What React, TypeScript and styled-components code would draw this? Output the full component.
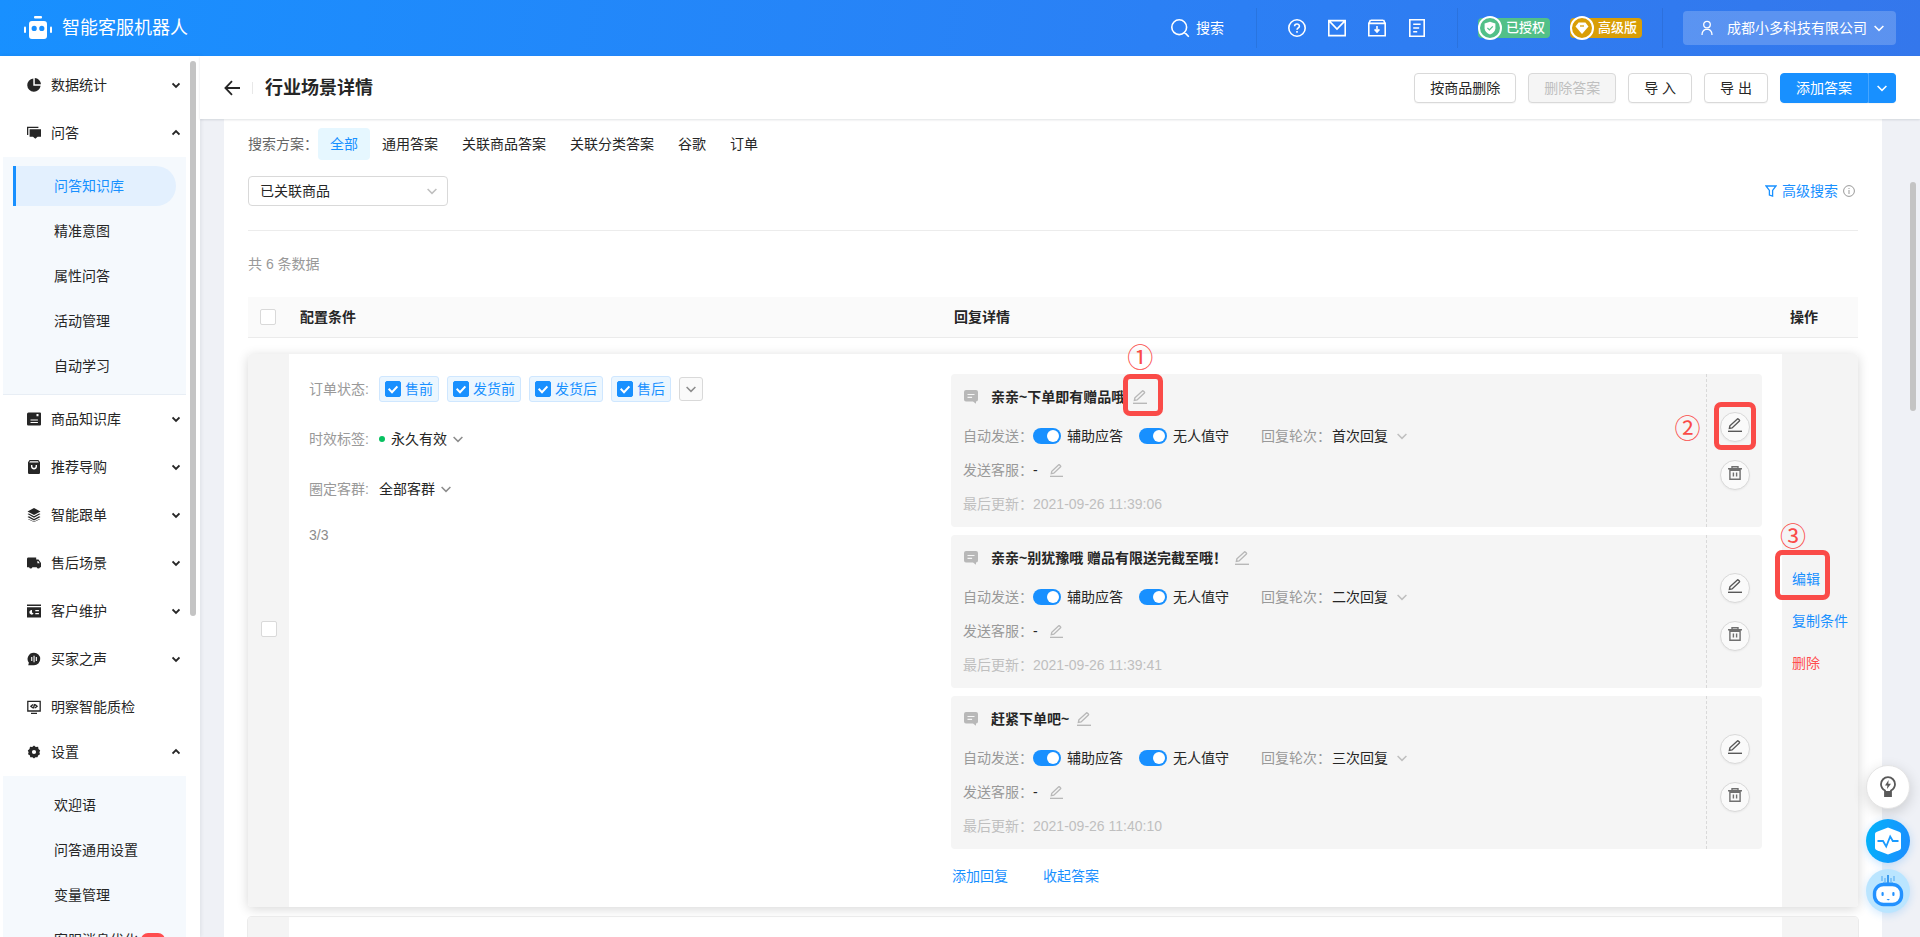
import React from "react";
import styled, { createGlobalStyle, css } from "styled-components";

const BLUE = "#1890ff";
const RED = "#fa4b48";

const GlobalStyle = createGlobalStyle`
  *, *::before, *::after { box-sizing: border-box; }
  body {
    margin: 0;
    color: #262626;
    background: #eff1f6;
    font-family: "Liberation Sans", "Noto Sans CJK SC", sans-serif;
    font-size: 14px;
    line-height: 22px;
  }
  button, input, select { font: inherit; color: inherit; margin: 0; }
  button { cursor: pointer; }
  a { text-decoration: none; }
  svg { display: block; flex: none; }
`;

/* ---------- icons ---------- */

type IconProps = { size?: number; color?: string };

const Chevron = ({ size = 10, color = "currentColor", up = false, weight = 1.5 }: IconProps & { up?: boolean; weight?: number }) => (
  <svg width={size} height={size} viewBox="0 0 10 10" fill="none" stroke={color} strokeWidth={weight} aria-hidden>
    <path d={up ? "M.6 7L5 2.600 9.400 7" : "M.6 3L5 7.400 9.400 3"} />
  </svg>
);

const PencilIcon = ({ size = 14, color = "#b8b8b8" }: IconProps) => (
  <svg width={size} height={size} viewBox="0 0 14 14" fill="none" stroke={color} strokeWidth="1.4" aria-hidden>
    <path d="M1.400 10.400l.5-2.600L9.400.9a.6.6 0 0 1 .8 0l1.200 1.200a.6.6 0 0 1 0 .8L4.100 9.900z" />
    <path d="M0 13.300h14" />
  </svg>
);

const TrashIcon = () => (
  <svg width="14" height="14" viewBox="0 0 14 14" fill="none" stroke="#707070" strokeWidth="1.4" aria-hidden>
    <path d="M0 2.8h14M4 2.6V.7h6v1.9M1.9 4.2v9.1h10.2V4.2zM5.4 6.6v4M8.6 6.6v4" />
  </svg>
);

const RobotLogo = () => (
  <svg width="28" height="24" viewBox="0 0 28 24" fill="#fff" aria-hidden>
    <rect x="10" y="0" width="8" height="2.6" rx="1" />
    <path fillRule="evenodd" d="M8 5h12a3 3 0 0 1 3 3v12a3 3 0 0 1-3 3H8a3 3 0 0 1-3-3V8a3 3 0 0 1 3-3zm2.2 4.8a2.6 2.6 0 1 0 0 5.2 2.6 2.6 0 0 0 0-5.2zm7.6 0a2.6 2.6 0 1 0 0 5.2 2.6 2.6 0 0 0 0-5.2z" />
    <rect x="0" y="10.4" width="2" height="6.6" rx="1" />
    <rect x="26" y="10.4" width="2" height="6.6" rx="1" />
  </svg>
);

const HeaderIcon = ({ name }: { name: string }) => (
  <svg width="20" height="20" viewBox="0 0 20 20" fill="none" stroke="#fff" strokeWidth="1.6" aria-hidden>
    {name === "search" && <path d="M9.200 1.800a7.400 7.400 0 1 0 0 14.800 7.400 7.400 0 0 0 0-14.800zM14.600 14.400l4.200 4.400" />}
    {name === "help" && (
      <>
        <circle cx="10" cy="10" r="8.2" />
        <path d="M7.6 8.2c0-3 4.8-3 4.8 0 0 1.7-2.4 1.800-2.400 3.600M10 13v1.800" />
      </>
    )}
    {name === "mail" && <path d="M1.8 2.6h16.4v15H1.8zM2.6 3.4L10 11l7.4-7.6" />}
    {name === "archive" && <path d="M3.6 2.2h12.8M1.8 5.4h16.4v12.4H1.8zM3.4 2l-1.4 3.4M16.6 2L18 5.4M10 8v5.6M7.6 11.4l2.4 2.6 2.4-2.6" />}
    {name === "doc" && <path d="M2.8 1.8h14.4v16.4H2.8zM6.2 6.2h7.4M6.2 10h6M6.2 13.8h4" />}
  </svg>
);

const UserIcon = () => (
  <svg width="12" height="16" viewBox="0 0 12 16" fill="none" stroke="#fff" strokeWidth="1.3" aria-hidden>
    <circle cx="6" cy="4.6" r="3.3" />
    <path d="M1 15c0-3 1.6-5 3.6-5.6h2.8C9.4 10 11 12 11 15" />
  </svg>
);

const ShieldIcon = () => (
  <svg width="14" height="14" viewBox="0 0 14 14" aria-hidden>
    <path d="M7 .8l5.4 1.8v4.6c0 3-2.4 5-5.400 6.200-3-1.200-5.400-3.200-5.400-6.200V2.600z" fill="#fff" />
    <path d="M4.4 6.9l2 2 3.4-3.5" fill="none" stroke="#52c088" strokeWidth="1.3" />
  </svg>
);

const DiamondIcon = () => (
  <svg width="14" height="14" viewBox="0 0 14 14" aria-hidden>
    <path d="M3.6 1.5h6.8l3.1 4L7 13 .5 5.5z" fill="#fff" />
    <path d="M5 5h4" fill="none" stroke="#d99e06" strokeWidth="1.3" />
  </svg>
);

const MenuIcon = ({ name }: { name: string }) => (
  <svg width="14" height="14" viewBox="0 0 14 14" fill="#262626" aria-hidden>
    {name === "pie" && <path d="M6.3 .4v7.3h7.3A6.7 6.7 0 1 1 6.3.4zM7.8 0A6.6 6.6 0 0 1 14 6.2H7.8z" />}
    {name === "chat" && <path d="M0 .8h11.4v1.2H1.3V9H0zM2.6 3.2H14v7.6h-3.400l-2.300 2-2.300-2H2.600z" />}
    {name === "book" && <path fillRule="evenodd" d="M1.5.5H13a1 1 0 0 1 1 1V12.5a1 1 0 0 1-1 1H1.2A1.2 1.2 0 0 1 0 12.3V2A1.5 1.5 0 0 1 1.5.5zM9.5 2v2.3h2V2zM3.5 7.4v1.1h7.4V7.4zM3.5 10v1.1h7.4V10z" />}
    {name === "bag" && <path fillRule="evenodd" d="M2.6 0h8.8L13 2.2v10.6A1.2 1.2 0 0 1 11.8 14H2.2A1.2 1.2 0 0 1 1 12.8V2.2zM3 1.3l-.7 1.1h9.4l-.7-1.1zM4 5v1.4c0 4 6 4 6 0V5H8.6v1.3c0 2-3.2 2-3.2 0V5z" />}
    {name === "layers" && <path d="M7 0l6.5 3.4L7 7 .5 3.4zM.5 6.1l1.4-.6L7 8.2l5.1-2.7 1.4.6L7 9.700zM.5 8.900l1.400-.6L7 11l5.100-2.700 1.400.6L7 12.500zM1 11.300L7 14l6-2.700-.6-.3L7 13.400 1.600 11z" />}
    {name === "truck" && <path fillRule="evenodd" d="M.8 1.6h8.4v2h2.3L14 7v4.2h-1a1.7 1.7 0 0 1-3.3 0H5.4a1.7 1.7 0 0 1-3.3 0H0V2.4zM10.4 5v2.3h2.3L11.2 5z" />}
    {name === "card" && <path fillRule="evenodd" d="M0 .5h14v1.6H0zM0 3.3h14v10.2H0zM5 6a2.3 2.3 0 1 0 1.6 3.5L5 8.4zM8.3 6v1.2h3.6V6zM8.3 9v1.2h3.6V9z" />}
    {name === "voice" && <path fillRule="evenodd" d="M7 .8a6.2 6.2 0 1 1 0 12.4H1.2l.7-2.4A6.2 6.2 0 0 1 7 .8zM4.2 5v4h1.1V5zM6.5 3.8v6.4h1.1V3.8zM8.8 5v4h1.1V5z" />}
    {name === "monitor" && (
      <path
        d="M.8 1.4h12.4v9.6H.8zM4 13.3h6M6 4.5L3.9 6.2 6 7.9M8 4.5l2.1 1.7L8 7.9M7.500 4l-1 4.500"
        fill="none"
        stroke="#262626"
        strokeWidth="1.3"
      />
    )}
    {name === "gear" && <path fillRule="evenodd" d="M7 .6l1.8 1.3 2.3-.1.4 2.2L13.2 5.5l-.8 1.8.6 2-1.9 1.1-.6 1.9-2.1-.1L7 13.6l-1.5-1.4-2.2.1-.5-2L1 9.2l.6-2L.8 5.4 2.5 4l.5-2.2 2.2.1zM7 4.900a2.100 2.100 0 1 0 0 4.200 2.100 2.100 0 0 0 0-4.200z" />}
  </svg>
);

const BackArrow = () => (
  <svg width="16" height="16" viewBox="0 0 16 16" fill="none" stroke="#262626" strokeWidth="1.8" aria-hidden>
    <path d="M8 1.2L1.4 8 8 14.8M1.6 8H16" />
  </svg>
);

const FilterIcon = () => (
  <svg width="12" height="12" viewBox="0 0 12 12" fill="none" stroke={BLUE} strokeWidth="1.3" aria-hidden>
    <path d="M1 1h10L7.6 5.4V11L4.4 10V5.4z" />
  </svg>
);

const InfoIcon = () => (
  <svg width="12" height="12" viewBox="0 0 12 12" fill="none" stroke="#999" aria-hidden>
    <circle cx="6" cy="6" r="5.4" />
    <path d="M6 5v4M6 3v1" />
  </svg>
);

const MessageIcon = () => (
  <svg width="14" height="14" viewBox="0 0 14 14" aria-hidden>
    <path d="M2 0h10a2 2 0 0 1 2 2v7.5a2 2 0 0 1-2 2v2.200L9 11.500H2a2 2 0 0 1-2-2V2a2 2 0 0 1 2-2z" fill="#b8b8b8" />
    <path d="M3.5 4.5h7M3.5 7.3h4.6" stroke="#f5f5f5" strokeWidth="1.2" />
  </svg>
);

const BulbIcon = () => (
  <svg width="16" height="22" viewBox="0 0 16 22" fill="none" stroke="#595959" strokeWidth="1.8" aria-hidden>
    <path d="M5 16v-1.500C2.500 13 1 11 1 8.200a7 7 0 0 1 14 0c0 2.800-1.500 4.800-4 6.300V16zM5 16v4h6v-4M5 18h6" />
    <path d="M8.6 4L5 9.4h2.400L7 13l4-5.300H8.300z" fill="#595959" stroke="none" />
  </svg>
);

const PulseIcon = () => (
  <svg width="28" height="28" viewBox="0 0 28 28" aria-hidden>
    <path d="M14 .5l11 4.300c1.500.6 2 1.200 2 2.700v13c0 1.500-.5 2.100-2 2.700l-11 4.300-11-4.300c-1.500-.6-2-1.200-2-2.700v-13C1 6 1.500 5.400 3 4.800z" fill="#fff" />
    <path d="M3.5 14H9l3.2 5.500 4-10 2.6 4.500h5.700" fill="none" stroke="#1a9bff" strokeWidth="1.8" />
  </svg>
);

const RobotFace = () => (
  <svg width="32" height="32" viewBox="0 0 32 32" aria-hidden>
    <path d="M10 1v5M13 3v4M19 3v4M22 1v5" stroke="#5fb2f5" strokeWidth="1.2" />
    <path d="M16 0v9M11 8.500h10" stroke="#3c9cf0" strokeWidth="2" />
    <rect x="2.5" y="9.5" width="27" height="20" rx="9" fill="#fff" stroke="#2392ff" strokeWidth="3.4" />
    <rect x="9.500" y="17" width="2.200" height="4" rx="1" fill="#2392ff" />
    <rect x="20.300" y="17" width="2.200" height="4" rx="1" fill="#2392ff" />
    <path d="M14.5 24h3.500l-1.800 1.600z" fill="#2392ff" />
  </svg>
);

/* ---------- shell ---------- */

const Shell = styled.div`
  display: flex;
  flex-direction: column;
  height: 100vh;
  overflow: hidden;
`;

const TopBar = styled.header`
  display: flex;
  align-items: center;
  justify-content: space-between;
  flex: none;
  height: 56px;
  padding: 0 24px;
  color: #fff;
  background: linear-gradient(100deg, #1890ff 0%, #2b80f5 60%, #3477ec 100%);
`;

const Brand = styled.div`
  display: flex;
  align-items: center;
  gap: 10px;
  font-size: 18px;
`;

const TopTools = styled.div`
  display: flex;
  align-items: center;
`;

const TopDivider = styled.span`
  width: 1px;
  height: 40px;
  background: rgba(0, 0, 0, 0.08);
`;

const SearchButton = styled.button`
  display: flex;
  align-items: center;
  gap: 6px;
  padding: 0 32px 0 0;
  border: 0;
  background: none;
`;

const IconGroup = styled.div`
  display: flex;
  gap: 16px;
  padding: 0 28px;
`;

const TopIconButton = styled.button`
  display: grid;
  place-items: center;
  width: 24px;
  height: 24px;
  padding: 0;
  border: 0;
  background: none;
`;

const BadgeGroup = styled.div`
  display: flex;
  gap: 20px;
  padding: 0 20px;
`;

const LicenseBadge = styled.span<{ $color: string }>`
  display: flex;
  align-items: center;
  gap: 4px;
  width: 72px;
  height: 20px;
  border-radius: 4px;
  background: ${(p) => p.$color};
  font-size: 13px;
  font-weight: 500;
  white-space: nowrap;
`;

const BadgeDisc = styled.span<{ $color: string }>`
  display: grid;
  place-items: center;
  flex: none;
  width: 24px;
  height: 24px;
  border: 2px solid #fff;
  border-radius: 50%;
  background: ${(p) => p.$color};
`;

const AccountButton = styled.button`
  display: flex;
  align-items: center;
  gap: 7px;
  height: 34px;
  margin-left: 20px;
  padding: 0 12px 0 18px;
  border: 0;
  border-radius: 4px;
  background: rgba(255, 255, 255, 0.2);
`;

const AccountName = styled.span`
  padding-left: 7px;
`;

const Body = styled.div`
  display: flex;
  flex: 1;
  min-height: 0;
`;

/* ---------- sidebar ---------- */

const Sidebar = styled.aside`
  position: relative;
  z-index: 1;
  flex: none;
  width: 200px;
  background: #fff;
  box-shadow: 1px 0 4px rgba(0, 21, 41, 0.08);
`;

const SideScroll = styled.nav`
  height: 100%;
  padding-top: 5px;
  overflow-y: auto;
  scrollbar-width: none;
`;

const ScrollThumb = styled.span<{ $top: number; $share: number }>`
  position: absolute;
  top: ${(p) => p.$top}px;
  right: 4px;
  width: 6px;
  height: ${(p) => p.$share}%;
  border-radius: 3px;
  background: #c4c4c4;
`;

const GroupButton = styled.button<{ $leaf?: boolean }>`
  display: flex;
  align-items: center;
  gap: 10px;
  width: 100%;
  height: ${(p) => (p.$leaf ? 45 : 48)}px;
  padding: ${(p) => (p.$leaf ? 3 : 0)}px 20px 0 27px;
  border: 0;
  background: none;
  text-align: left;
`;

const GroupLabel = styled.span`
  flex: 1;
`;

const SubMenu = styled.div`
  margin: 0 14px 0 3px;
  padding: 4px 10px 8px;
  border-bottom: 1px solid #e8eef5;
  background: #f5f9fd;
`;

const SubLink = styled.a<{ $active?: boolean }>`
  display: flex;
  align-items: center;
  gap: 3px;
  height: 40px;
  margin-top: 5px;
  padding-left: 38px;
  border-left: 3px solid transparent;
  color: #262626;
  white-space: nowrap;
  ${(p) =>
    p.$active &&
    css`
      border-left-color: ${BLUE};
      border-radius: 0 20px 20px 0;
      background: #e3f0fe;
      color: ${BLUE};
    `}
`;

const NewMark = styled.span`
  width: 24px;
  height: 14px;
  border-radius: 7px;
  background: #ff4d4f;
`;

/* ---------- main ---------- */

const Main = styled.main`
  display: flex;
  flex: 1;
  flex-direction: column;
  min-width: 0;
`;

const PageHeader = styled.div`
  position: relative;
  z-index: 1;
  display: flex;
  align-items: center;
  justify-content: space-between;
  flex: none;
  height: 63px;
  padding: 0 24px;
  background: #fff;
  box-shadow: 0 1px 2px rgba(0, 21, 41, 0.12);
`;

const PageHeading = styled.div`
  display: flex;
  align-items: center;
  gap: 12px;
`;

const BackButton = styled.button`
  padding: 0;
  border: 0;
  background: none;
`;

const HeadingRule = styled.span`
  width: 1px;
  height: 12px;
  background: #e8e8e8;
`;

const PageTitle = styled.h1`
  margin: 0;
  font-size: 18px;
  line-height: 24px;
  font-weight: 700;
`;

const ButtonRow = styled.div`
  display: flex;
  gap: 12px;
`;

const Button = styled.button`
  height: 30px;
  padding: 0 15px;
  border: 1px solid #d9d9d9;
  border-radius: 4px;
  background: #fff;
  line-height: 20px;
  white-space: pre;
  box-shadow: 0 1px 1px rgba(0, 0, 0, 0.04);
  &:disabled {
    background: #f5f5f5;
    color: #bfbfbf;
    cursor: not-allowed;
  }
`;

const SplitButton = styled.div`
  display: flex;
`;

const PrimaryButton = styled(Button)`
  border-color: ${BLUE};
  border-radius: 4px 0 0 4px;
  background: ${BLUE};
  color: #fff;
`;

const PrimaryMore = styled(PrimaryButton)`
  padding: 0 8px;
  border-left-color: #46a6ff;
  border-radius: 0 4px 4px 0;
`;

const ScrollFrame = styled.div`
  position: relative;
  flex: 1;
  min-height: 0;
`;

const Scroller = styled.div`
  height: 100%;
  padding: 0 38px 0 24px;
  overflow-y: auto;
  scrollbar-width: none;
`;

const Panel = styled.section`
  padding: 9px 24px 24px;
  background: #fff;
`;

const SchemeRow = styled.div`
  display: flex;
  align-items: center;
  color: #666;
`;

const SchemeLabel = styled.span`
  width: 70px;
`;

const SchemeTab = styled.button<{ $active?: boolean }>`
  height: 32px;
  padding: 0 12px;
  border: 0;
  border-radius: 4px;
  background: ${(p) => (p.$active ? "#e6f7ff" : "none")};
  color: ${(p) => (p.$active ? BLUE : "#262626")};
`;

const FilterRow = styled.div`
  display: flex;
  align-items: center;
  justify-content: space-between;
  margin-top: 16px;
  padding-bottom: 24px;
  border-bottom: 1px solid #ececec;
`;

const SelectWrap = styled.span<{ $boxed?: boolean; $gap?: number }>`
  position: relative;
  display: inline-flex;
  align-items: center;
  ${(p) => p.$boxed && "width: 200px;"}
  select {
    appearance: none;
    width: 100%;
    height: ${(p) => (p.$boxed ? 30 : 22)}px;
    padding: ${(p) => (p.$boxed ? "0 30px 0 11px" : `0 ${(p.$gap ?? 6) + 10}px 0 0`)};
    border: ${(p) => (p.$boxed ? "1px solid #d9d9d9" : "0")};
    border-radius: 4px;
    background: transparent;
    outline: none;
    cursor: pointer;
  }
  svg {
    position: absolute;
    right: ${(p) => (p.$boxed ? 11 : 0)}px;
    pointer-events: none;
  }
`;

const AdvancedSearch = styled.a`
  display: flex;
  align-items: center;
  gap: 5px;
  padding-right: 3px;
  color: ${BLUE};
`;

const Total = styled.p`
  margin: 22px 0;
  color: #999;
`;

const Table = styled.table`
  width: 100%;
  table-layout: fixed;
  border-collapse: separate;
  border-spacing: 0;
  text-align: left;
`;

const Column = styled.col<{ $width?: string }>`
  width: ${(p) => p.$width ?? "auto"};
`;

const HeadCell = styled.th<{ $pad: number }>`
  height: 41px;
  padding: 0 0 0 ${(p) => p.$pad}px;
  border-bottom: 1px solid #ebebeb;
  background: #fafafa;
  font-weight: 700;
`;

const Gap = styled.td<{ $height: number }>`
  height: ${(p) => p.$height}px;
  padding: 0;
`;

const CardRow = styled.tr<{ $raised?: boolean }>`
  border-radius: 4px;
  box-shadow: ${(p) => (p.$raised ? "0 2px 12px rgba(0, 0, 0, 0.16)" : "0 0 0 1px #ebebeb")};
`;

const SideCell = styled.td<{ $end?: boolean }>`
  padding: ${(p) => (p.$end ? "0 0 20px 10px" : "0 0 4px 13px")};
  border-radius: ${(p) => (p.$end ? "0 4px 4px 0" : "4px 0 0 4px")};
  background: #f4f4f4;
  vertical-align: middle;
`;

const ConditionCell = styled.td`
  padding: 22px 20px;
  vertical-align: top;
`;

const ReplyCell = styled.td`
  padding: 20px 20px 20px 18px;
  vertical-align: top;
`;

const Check = styled.input.attrs({ type: "checkbox" })`
  appearance: none;
  display: block;
  flex: none;
  width: 16px;
  height: 16px;
  border: 1px solid #d9d9d9;
  border-radius: 2px;
  background: #fff;
  cursor: pointer;
  &:checked {
    border-color: ${BLUE};
    background: ${BLUE};
  }
`;

/* ---------- conditions ---------- */

const Conditions = styled.div`
  display: flex;
  flex-direction: column;
  gap: 24px;
`;

const ConditionRow = styled.div`
  display: flex;
  align-items: center;
  gap: 10px;
  height: 26px;
`;

const ConditionLabel = styled.span`
  width: 60px;
  color: #999;
`;

const StageList = styled.div`
  display: flex;
  align-items: center;
  gap: 8px;
`;

const StageTag = styled.label`
  position: relative;
  display: flex;
  align-items: center;
  gap: 4px;
  height: 26px;
  padding: 0 5px;
  border: 1px solid #cfe7ff;
  border-radius: 3px;
  background: #ebf6ff;
  color: ${BLUE};
  line-height: 24px;
  svg {
    position: absolute;
    left: 8px;
    pointer-events: none;
  }
`;

const ExpandButton = styled.button`
  display: grid;
  place-items: center;
  width: 24px;
  height: 24px;
  padding: 0;
  border: 1px solid #d9d9d9;
  border-radius: 3px;
  background: #fafafa;
  color: #8c8c8c;
`;

const ValidDot = styled.span`
  width: 6px;
  height: 6px;
  margin-right: -4px;
  border-radius: 50%;
  background: #07c160;
`;

const Progress = styled.div`
  color: #8c8c8c;
  line-height: 18px;
`;

/* ---------- replies ---------- */

const ReplyList = styled.div`
  display: flex;
  flex-direction: column;
  gap: 8px;
`;

const ReplyCard = styled.article`
  display: flex;
  border-radius: 4px;
  background: #f5f5f5;
`;

const ReplyBody = styled.div`
  display: flex;
  flex: 1;
  flex-direction: column;
  gap: 12px;
  padding: 12px;
`;

const ReplyTitle = styled.div`
  display: flex;
  align-items: center;
  margin-bottom: 5px;
  padding-left: 1px;
`;

const ReplyText = styled.strong`
  margin: 0 8px 0 13px;
`;

const TitleEdit = styled.span`
  position: relative;
`;

const PlainIconButton = styled.button`
  display: block;
  padding: 0;
  border: 0;
  background: none;
`;

const ReplyLine = styled.div<{ $faint?: boolean }>`
  display: flex;
  align-items: center;
  height: 22px;
  color: ${(p) => (p.$faint ? "#bfbfbf" : "#262626")};
`;

const FieldLabel = styled.span<{ $faint?: boolean }>`
  width: 70px;
  color: ${(p) => (p.$faint ? "#bfbfbf" : "#999")};
`;

const SwitchLabel = styled.label`
  display: flex;
  align-items: center;
  gap: 6px;
  margin-right: 16px;
`;

const Switch = styled.input.attrs({ type: "checkbox", role: "switch" })`
  appearance: none;
  display: flex;
  justify-content: flex-start;
  align-items: center;
  width: 28px;
  height: 16px;
  padding: 0 2px;
  border-radius: 8px;
  background: #bfbfbf;
  cursor: pointer;
  &::before {
    content: "";
    width: 12px;
    height: 12px;
    border-radius: 50%;
    background: #fff;
  }
  &:checked {
    justify-content: flex-end;
    background: ${BLUE};
  }
`;

const RoundField = styled.label`
  display: flex;
  align-items: center;
  gap: 1px;
  margin-left: 16px;
`;

const AgentValue = styled.span`
  width: 17px;
`;

const ReplyActions = styled.div`
  display: flex;
  flex-direction: column;
  align-items: center;
  justify-content: center;
  gap: 18px;
  width: 56px;
  border-left: 1px dashed #d9d9d9;
`;

const RoundAction = styled.div`
  position: relative;
`;

const RoundButton = styled.button`
  display: grid;
  place-items: center;
  width: 30px;
  height: 30px;
  padding: 0 0 3px;
  border: 1px solid #d9d9d9;
  border-radius: 50%;
  background: #fafafa;
  box-shadow: 0 1px 2px rgba(0, 0, 0, 0.05);
`;

const ReplyFooter = styled.div`
  display: flex;
  gap: 35px;
  margin-top: 16px;
  padding-left: 1px;
`;

const TextLink = styled.a<{ $danger?: boolean }>`
  color: ${(p) => (p.$danger ? "#ff4d4f" : BLUE)};
`;

const Operations = styled.div`
  display: flex;
  flex-direction: column;
  align-items: flex-start;
  gap: 20px;
`;

const OperationItem = styled.div`
  position: relative;
  white-space: nowrap;
`;

/* ---------- step marks drawn over the page ---------- */

const StepFrame = styled.span<{ $w: number; $h: number; $x: number; $y: number }>`
  position: absolute;
  z-index: 2;
  left: ${(p) => p.$x}px;
  top: ${(p) => p.$y}px;
  width: ${(p) => p.$w}px;
  height: ${(p) => p.$h}px;
  border: 5px solid ${RED};
  border-radius: 7px;
  pointer-events: none;
`;

const StepNumber = styled.span<{ $x: number; $y: number }>`
  position: absolute;
  z-index: 2;
  left: ${(p) => p.$x}px;
  top: ${(p) => p.$y}px;
  color: ${RED};
  font-family: "Noto Sans CJK SC", sans-serif;
  font-size: 26px;
  line-height: 26px;
  pointer-events: none;
`;

const FloatStack = styled.div`
  position: fixed;
  right: 10px;
  bottom: 24px;
  z-index: 3;
  display: flex;
  flex-direction: column;
  align-items: center;
  gap: 6px;
`;

const FloatButton = styled.button<{ $tone: "plain" | "pulse" | "robot" }>`
  display: grid;
  place-items: center;
  width: 44px;
  height: 44px;
  padding: 0;
  border: 0;
  border-radius: 50%;
  ${(p) =>
    p.$tone === "plain" &&
    css`
      margin-bottom: 4px;
      border: 1px solid #e4e4e4;
      background: #fff;
      box-shadow: 0 4px 14px rgba(0, 0, 0, 0.16);
    `}
  ${(p) =>
    p.$tone === "pulse" &&
    css`
      background: linear-gradient(100deg, #00b4fa, #1e8cff);
      box-shadow: 0 2px 8px rgba(24, 144, 255, 0.25);
    `}
  ${(p) =>
    p.$tone === "robot" &&
    css`
      background: #bae5ff;
      box-shadow: 0 2px 8px rgba(24, 144, 255, 0.2);
    `}
`;

/* ---------- data ---------- */

type Group = { icon: string; label: string; children?: string[]; leaf?: boolean };

const GROUPS: Group[] = [
  { icon: "pie", label: "数据统计" },
  { icon: "chat", label: "问答", children: ["问答知识库", "精准意图", "属性问答", "活动管理", "自动学习"] },
  { icon: "book", label: "商品知识库" },
  { icon: "bag", label: "推荐导购" },
  { icon: "layers", label: "智能跟单" },
  { icon: "truck", label: "售后场景" },
  { icon: "card", label: "客户维护" },
  { icon: "voice", label: "买家之声" },
  { icon: "monitor", label: "明察智能质检", leaf: true },
  { icon: "gear", label: "设置", children: ["欢迎语", "问答通用设置", "变量管理", "客服消息优化"] },
];

const SCHEMES = ["全部", "通用答案", "关联商品答案", "关联分类答案", "谷歌", "订单"];
const STAGES = ["售前", "发货前", "发货后", "售后"];
const REPLIES = [
  { text: "亲亲~下单即有赠品哦", round: "首次回复", time: "2021-09-26 11:39:06" },
  { text: "亲亲~别犹豫哦 赠品有限送完截至哦！", round: "二次回复", time: "2021-09-26 11:39:41" },
  { text: "赶紧下单吧~", round: "三次回复", time: "2021-09-26 11:40:10" },
];

const InlineSelect = ({ label, value, gap, color = "#8c8c8c" }: { label: string; value: string; gap?: number; color?: string }) => (
  <SelectWrap $gap={gap}>
    <select aria-label={label} defaultValue={value}>
      <option>{value}</option>
    </select>
    <Chevron color={color} />
  </SelectWrap>
);

const Reply = ({ text, round, time, first }: { text: string; round: string; time: string; first: boolean }) => (
  <ReplyCard>
    <ReplyBody>
      <ReplyTitle>
        <MessageIcon />
        <ReplyText>{text}</ReplyText>
        <TitleEdit>
          <PlainIconButton aria-label="编辑标题">
            <PencilIcon />
          </PlainIconButton>
          {first && (
            <>
              <StepFrame $x={-10} $y={-16} $w={40} $h={42} />
              <StepNumber $x={-6} $y={-47}>①</StepNumber>
            </>
          )}
        </TitleEdit>
      </ReplyTitle>
      <ReplyLine>
        <FieldLabel>自动发送：</FieldLabel>
        <SwitchLabel>
          <Switch defaultChecked />
          辅助应答
        </SwitchLabel>
        <SwitchLabel>
          <Switch defaultChecked />
          无人值守
        </SwitchLabel>
        <RoundField>
          <FieldLabel>回复轮次：</FieldLabel>
          <InlineSelect label="回复轮次" value={round} gap={9} color="#bfbfbf" />
        </RoundField>
      </ReplyLine>
      <ReplyLine>
        <FieldLabel>发送客服：</FieldLabel>
        <AgentValue>-</AgentValue>
        <PlainIconButton aria-label="编辑发送客服">
          <PencilIcon size={13} />
        </PlainIconButton>
      </ReplyLine>
      <ReplyLine $faint>
        <FieldLabel $faint>最后更新：</FieldLabel>
        {time}
      </ReplyLine>
    </ReplyBody>
    <ReplyActions>
      <RoundAction>
        <RoundButton aria-label="编辑回复">
          <PencilIcon color="#595959" />
        </RoundButton>
        {first && (
          <>
            <StepFrame $x={-6} $y={-10} $w={42} $h={48} />
            <StepNumber $x={-45} $y={2}>②</StepNumber>
          </>
        )}
      </RoundAction>
      <RoundButton aria-label="删除回复">
        <TrashIcon />
      </RoundButton>
    </ReplyActions>
  </ReplyCard>
);

export default function App() {
  return (
    <>
      <GlobalStyle />
      <Shell>
        <TopBar>
          <Brand>
            <RobotLogo />
            智能客服机器人
          </Brand>
          <TopTools>
            <SearchButton>
              <HeaderIcon name="search" />
              搜索
            </SearchButton>
            <TopDivider />
            <IconGroup>
              {[["help", "帮助"], ["mail", "消息"], ["archive", "下载"], ["doc", "文档"]].map(([name, label]) => (
                <TopIconButton key={name} aria-label={label}>
                  <HeaderIcon name={name} />
                </TopIconButton>
              ))}
            </IconGroup>
            <TopDivider />
            <BadgeGroup>
              <LicenseBadge $color="#52c088">
                <BadgeDisc $color="#52c088"><ShieldIcon /></BadgeDisc>
                已授权
              </LicenseBadge>
              <LicenseBadge $color="#d99e06">
                <BadgeDisc $color="#d99e06"><DiamondIcon /></BadgeDisc>
                高级版
              </LicenseBadge>
            </BadgeGroup>
            <TopDivider />
            <AccountButton>
              <UserIcon />
              <AccountName>成都小多科技有限公司</AccountName>
              <Chevron />
            </AccountButton>
          </TopTools>
        </TopBar>

        <Body>
          <Sidebar>
            <SideScroll>
              {GROUPS.map((g) => (
                <React.Fragment key={g.label}>
                  <GroupButton $leaf={g.leaf}>
                    <MenuIcon name={g.icon} />
                    <GroupLabel>{g.label}</GroupLabel>
                    {!g.leaf && <Chevron size={8} up={!!g.children} weight={2.4} />}
                  </GroupButton>
                  {g.children && (
                    <SubMenu>
                      {g.children.map((c) => (
                        <SubLink key={c} href="#" $active={c === "问答知识库"}>
                          {c}
                          {c === "客服消息优化" && <NewMark />}
                        </SubLink>
                      ))}
                    </SubMenu>
                  )}
                </React.Fragment>
              ))}
            </SideScroll>
            <ScrollThumb $top={5} $share={63} />
          </Sidebar>

          <Main>
            <PageHeader>
              <PageHeading>
                <BackButton aria-label="返回"><BackArrow /></BackButton>
                <HeadingRule />
                <PageTitle>行业场景详情</PageTitle>
              </PageHeading>
              <ButtonRow>
                <Button>按商品删除</Button>
                <Button disabled>删除答案</Button>
                <Button>导 入</Button>
                <Button>导 出</Button>
                <SplitButton>
                  <PrimaryButton>添加答案</PrimaryButton>
                  <PrimaryMore aria-label="更多"><Chevron /></PrimaryMore>
                </SplitButton>
              </ButtonRow>
            </PageHeader>

            <ScrollFrame>
              <Scroller>
                <Panel>
                  <SchemeRow>
                    <SchemeLabel>搜索方案：</SchemeLabel>
                    {SCHEMES.map((s, i) => (
                      <SchemeTab key={s} $active={i === 0}>{s}</SchemeTab>
                    ))}
                  </SchemeRow>
                  <FilterRow>
                    <SelectWrap $boxed>
                      <select aria-label="关联商品" defaultValue="已关联商品">
                        <option>已关联商品</option>
                      </select>
                      <Chevron color="#bfbfbf" />
                    </SelectWrap>
                    <AdvancedSearch href="#">
                      <FilterIcon />
                      高级搜索
                      <InfoIcon />
                    </AdvancedSearch>
                  </FilterRow>
                  <Total>共 6 条数据</Total>

                  <Table>
                    <colgroup>
                      <Column $width="41px" />
                      <Column $width="40%" />
                      <Column />
                      <Column $width="76px" />
                    </colgroup>
                    <thead>
                      <tr>
                        <HeadCell $pad={12}><Check aria-label="全选" /></HeadCell>
                        <HeadCell $pad={11}>配置条件</HeadCell>
                        <HeadCell $pad={21}>回复详情</HeadCell>
                        <HeadCell $pad={8}>操作</HeadCell>
                      </tr>
                    </thead>
                    <tbody>
                      <tr><Gap colSpan={4} $height={16} /></tr>
                      <CardRow $raised>
                        <SideCell><Check aria-label="选择答案" /></SideCell>
                        <ConditionCell>
                          <Conditions>
                            <ConditionRow>
                              <ConditionLabel>订单状态:</ConditionLabel>
                              <StageList>
                                {STAGES.map((s) => (
                                  <StageTag key={s}>
                                    <Check defaultChecked />
                                    <svg width="10" height="10" viewBox="0 0 10 10" fill="none" stroke="#fff" strokeWidth="2">
                                      <path d="M.6 4.8L4 8.2 9.4 2.4" />
                                    </svg>
                                    {s}
                                  </StageTag>
                                ))}
                                <ExpandButton aria-label="展开"><Chevron /></ExpandButton>
                              </StageList>
                            </ConditionRow>
                            <ConditionRow>
                              <ConditionLabel>时效标签:</ConditionLabel>
                              <ValidDot />
                              <InlineSelect label="时效标签" value="永久有效" />
                            </ConditionRow>
                            <ConditionRow>
                              <ConditionLabel>圈定客群:</ConditionLabel>
                              <InlineSelect label="圈定客群" value="全部客群" />
                            </ConditionRow>
                            <Progress>3/3</Progress>
                          </Conditions>
                        </ConditionCell>
                        <ReplyCell>
                          <ReplyList>
                            {REPLIES.map((r, i) => (
                              <Reply key={r.time} {...r} first={i === 0} />
                            ))}
                          </ReplyList>
                          <ReplyFooter>
                            <TextLink href="#">添加回复</TextLink>
                            <TextLink href="#">收起答案</TextLink>
                          </ReplyFooter>
                        </ReplyCell>
                        <SideCell $end>
                          <Operations>
                            <OperationItem>
                              <TextLink href="#">编辑</TextLink>
                              <StepFrame $x={-17} $y={-18} $w={55} $h={50} />
                              <StepNumber $x={-12} $y={-46}>③</StepNumber>
                            </OperationItem>
                            <OperationItem><TextLink href="#">复制条件</TextLink></OperationItem>
                            <OperationItem><TextLink href="#" $danger>删除</TextLink></OperationItem>
                          </Operations>
                        </SideCell>
                      </CardRow>
                      <tr><Gap colSpan={4} $height={10} /></tr>
                      <CardRow>
                        <SideCell><Check aria-label="选择答案" /></SideCell>
                        <ConditionCell><Conditions><ConditionRow /><ConditionRow /></Conditions></ConditionCell>
                        <ReplyCell />
                        <SideCell $end />
                      </CardRow>
                    </tbody>
                  </Table>
                </Panel>
              </Scroller>
              <ScrollThumb $top={63} $share={28} />
            </ScrollFrame>
          </Main>
        </Body>
      </Shell>

      <FloatStack>
        <FloatButton $tone="plain" aria-label="建议"><BulbIcon /></FloatButton>
        <FloatButton $tone="pulse" aria-label="诊断"><PulseIcon /></FloatButton>
        <FloatButton $tone="robot" aria-label="客服助手"><RobotFace /></FloatButton>
      </FloatStack>
    </>
  );
}
